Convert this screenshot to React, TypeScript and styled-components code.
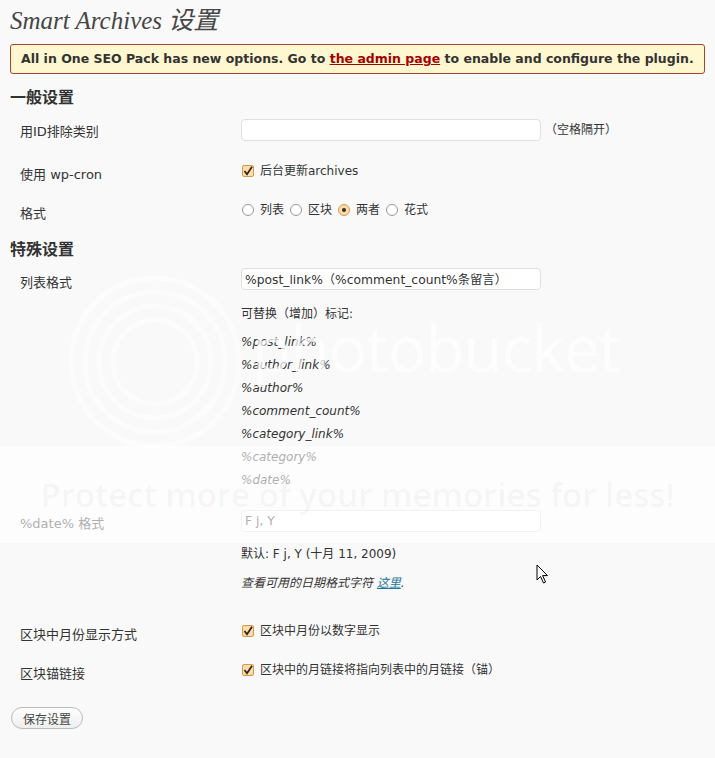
import React from 'react'
import styled, { createGlobalStyle } from 'styled-components'

const GlobalStyle = createGlobalStyle`
  html, body {
    margin: 0;
    padding: 0;
    background: #f9f9f9;
  }
  body {
    font-family: 'DejaVu Sans', 'Noto Sans CJK SC', sans-serif;
    font-size: 13px;
    color: #333;
  }
`

const Page = styled.div`
  position: relative;
  width: 715px;
  height: 758px;
  overflow: hidden;
  padding: 0 10px;
  box-sizing: border-box;
`

const Title = styled.h2`
  margin: 0;
  padding-top: 6px;
  font: italic normal 25px/29px 'Liberation Serif', 'Noto Sans CJK SC', serif;
  color: #464646;
`

const Notice = styled.div`
  margin-top: 9px;
  border: 1px solid #a8442f;
  border-radius: 3px;
  background: #fff7cf;
  padding: 5px 10px;
  line-height: 18px;
  font-size: 12.5px;
  font-weight: bold;
  color: #333;
  white-space: nowrap;
`

const NoticeLink = styled.a`
  color: #a40000;
  text-decoration: underline;
`

const SectionTitle = styled.h3<{ $mt: number }>`
  margin: ${(p) => p.$mt}px 0 0;
  font-size: 16px;
  line-height: 24px;
  font-weight: bold;
  color: #333;
`

const Row = styled.div<{ $pt?: number; $pb?: number }>`
  display: grid;
  grid-template-columns: 231px 1fr;
  align-items: start;
  padding: ${(p) => p.$pt ?? 11}px 0 ${(p) => p.$pb ?? 6}px;
`

const Label = styled.div<{ $offset?: number }>`
  padding: ${(p) => p.$offset ?? 4}px 0 0 10px;
  line-height: 18px;
  font-size: 13px;
`

const Field = styled.div`
  line-height: 18px;
  font-size: 12px;
`

const InputLine = styled.div`
  display: flex;
  align-items: center;
  gap: 4px;
`

const TextInput = styled.input`
  display: block;
  width: 300px;
  height: 22px;
  box-sizing: border-box;
  margin: 0;
  padding: 0 3px;
  border: 1px solid #dfdfdf;
  border-radius: 4px;
  background: #fff;
  font: 12.3px 'DejaVu Sans', 'Noto Sans CJK SC', sans-serif;
  color: #333;
  outline: none;
`

const Hint = styled.p<{ $mt: number }>`
  margin: ${(p) => p.$mt}px 0 0;
  line-height: 18px;
`

const HelpText = styled(Hint)`
  font-style: italic;
`

const HelpLink = styled.a`
  color: #21759b;
  text-decoration: underline;
`

const TokenList = styled.ul`
  list-style: none;
  margin: 8px 0 0;
  padding: 0;
`

const Token = styled.li`
  font-style: italic;
  line-height: 23px;
`

const ChoiceLine = styled.div`
  display: flex;
  align-items: center;
  height: 18px;
`

const Choice = styled.label`
  display: inline-flex;
  align-items: center;
  margin-right: 5px;
`

const CheckBox = styled.span`
  display: inline-flex;
  align-items: center;
  justify-content: center;
  width: 12px;
  height: 12px;
  box-sizing: border-box;
  margin: 0 6px 0 1px;
  border: 1px solid #d9984d;
  border-radius: 2px;
  background: #fcdcaa;
`

const Radio = styled.span<{ $on?: boolean }>`
  display: inline-flex;
  align-items: center;
  justify-content: center;
  width: 12px;
  height: 12px;
  box-sizing: border-box;
  margin: 0 6px 0 1px;
  border: 1px solid ${(p) => (p.$on ? '#d9984d' : '#9a9a9a')};
  border-radius: 50%;
  background: ${(p) => (p.$on ? '#fcdcaa' : '#fff')};

  &::after {
    content: '';
    display: ${(p) => (p.$on ? 'block' : 'none')};
    width: 4px;
    height: 4px;
    border-radius: 50%;
    background: #3a2a1a;
  }
`

const SaveButton = styled.button`
  display: block;
  margin: 18px 0 0 1px;
  height: 22px;
  padding: 0 11px;
  border: 1px solid #bbb;
  border-radius: 11px;
  background: linear-gradient(#ffffff, #eeeeee);
  font: 12px 'DejaVu Sans', 'Noto Sans CJK SC', sans-serif;
  color: #464646;
`

const Pointer = styled.svg`
  position: absolute;
  left: 536px;
  top: 564px;
`

const Watermark = styled.div`
  position: absolute;
  inset: 0;
  pointer-events: none;
`

const LogoRings = styled.svg`
  position: absolute;
  left: 65px;
  top: 272px;
`

const LogoText = styled.span`
  position: absolute;
  left: 252px;
  top: 308px;
  font: 64px/80px 'Open Sans', sans-serif;
  color: rgba(255, 255, 255, 0.7);
  letter-spacing: -1px;
`

const Band = styled.div`
  position: absolute;
  left: 0;
  right: 0;
  top: 446px;
  height: 97px;
  background: rgba(255, 255, 255, 0.6);
  display: flex;
  align-items: center;
  justify-content: center;
`

const BandText = styled.span`
  font: 600 33px 'Open Sans', sans-serif;
  color: rgba(0, 0, 0, 0.045);
  white-space: nowrap;
`

const Check = () => (
  <CheckBox>
    <svg width="10" height="10" viewBox="0 0 10 10">
      <path d="M1.5 5 L4 8.3 L9 0.8" fill="none" stroke="#2d2418" strokeWidth="1.7" />
    </svg>
  </CheckBox>
)

const tokens = [
  '%post_link%',
  '%author_link%',
  '%author%',
  '%comment_count%',
  '%category_link%',
  '%category%',
  '%date%',
]

const formats = [
  { label: '列表', on: false },
  { label: '区块', on: false },
  { label: '两者', on: true },
  { label: '花式', on: false },
]

const App: React.FC = () => {
  return (
    <>
      <GlobalStyle />
      <Page>
        <Title>Smart Archives 设置</Title>
        <Notice>
          All in One SEO Pack has new options. Go to{' '}
          <NoticeLink href="#">the admin page</NoticeLink> to enable and configure
          the plugin.
        </Notice>

        <SectionTitle $mt={12}>一般设置</SectionTitle>
        <Row $pt={9} $pb={10}>
          <Label>用ID排除类别</Label>
          <Field>
            <InputLine>
              <TextInput value="" readOnly />
              <span>（空格隔开）</span>
            </InputLine>
          </Field>
        </Row>
        <Row>
          <Label>使用 wp-cron</Label>
          <Field>
            <ChoiceLine>
              <Check />
              后台更新archives
            </ChoiceLine>
          </Field>
        </Row>
        <Row>
          <Label>格式</Label>
          <Field>
            <ChoiceLine>
              {formats.map((f) => (
                <Choice key={f.label}>
                  <Radio $on={f.on} />
                  {f.label}
                </Choice>
              ))}
            </ChoiceLine>
          </Field>
        </Row>

        <SectionTitle $mt={9}>特殊设置</SectionTitle>
        <Row $pt={6} $pb={10}>
          <Label $offset={6}>列表格式</Label>
          <Field>
            <TextInput value="%post_link%（%comment_count%条留言）" readOnly />
            <Hint $mt={15}>可替换（增加）标记:</Hint>
            <TokenList>
              {tokens.map((t) => (
                <Token key={t}>{t}</Token>
              ))}
            </TokenList>
          </Field>
        </Row>
        <Row $pt={8} $pb={10}>
          <Label $offset={5}>%date% 格式</Label>
          <Field>
            <TextInput value="F j, Y" readOnly />
            <Hint $mt={13}>默认: F j, Y (十月 11, 2009)</Hint>
            <HelpText $mt={11}>
              查看可用的日期格式字符 <HelpLink href="#">这里</HelpLink>.
            </HelpText>
          </Field>
        </Row>
        <Row $pt={20}>
          <Label>区块中月份显示方式</Label>
          <Field>
            <ChoiceLine>
              <Check />
              区块中月份以数字显示
            </ChoiceLine>
          </Field>
        </Row>
        <Row>
          <Label>区块锚链接</Label>
          <Field>
            <ChoiceLine>
              <Check />
              区块中的月链接将指向列表中的月链接（锚）
            </ChoiceLine>
          </Field>
        </Row>
        <SaveButton>保存设置</SaveButton>

        <Watermark>
          <LogoRings width="180" height="180" viewBox="0 0 180 180">
            {[84, 70, 56, 42].map((r) => (
              <circle key={r} cx="90" cy="90" r={r} fill="none" stroke="rgba(255,255,255,0.55)" strokeWidth="5" />
            ))}
          </LogoRings>
          <LogoText>photobucket</LogoText>
          <Band>
            <BandText>Protect more of your memories for less!</BandText>
          </Band>
        </Watermark>

        <Pointer width="14" height="21" viewBox="0 0 14 21">
          <path d="M1 1 L1 16 L4.5 12.5 L7.5 19 L9.5 18 L6.6 11.6 L11.5 11.6 Z" fill="#fff" stroke="#000" strokeWidth="1" strokeLinejoin="round" />
        </Pointer>
      </Page>
    </>
  )
}

export default App
